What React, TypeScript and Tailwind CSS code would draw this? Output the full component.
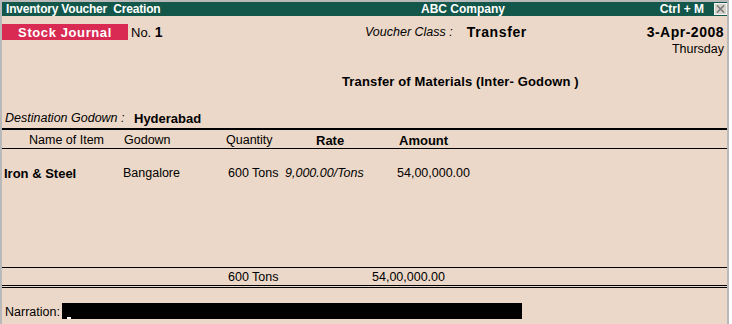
import React from "react";

const sans = { fontFamily: '"Liberation Sans", Arial, sans-serif' };

export default function App() {
  return (
    <div className="w-[732px] h-[324px] bg-white overflow-hidden" style={sans}>
      <div className="w-[729px] h-[324px] border-l-2 border-t-2 border-r-2 border-[#b9b9b9] bg-[#ecd8c8] flex flex-col text-black text-[12.5px]">
        {/* title bar */}
        <div className="h-[14px] bg-[#13574a] flex items-center text-white text-[12px] font-bold leading-none">
          <span className="w-[419px] pl-[4px] tracking-[-0.2px]">Inventory Voucher&nbsp; Creation</span>
          <span className="flex-1">ABC Company</span>
          <span className="mr-[10px]">Ctrl + M</span>
          <span className="w-[13px] h-[12px] bg-[#d8d4cc] border border-[#f4f4f4] flex items-center justify-center">
            <svg width="9" height="8" viewBox="0 0 9 8">
              <path d="M1 0.5 L8 7.5 M8 0.5 L1 7.5" stroke="#7a7a7a" strokeWidth="1.6" />
            </svg>
          </span>
        </div>

        {/* voucher header */}
        <div className="mt-[8px] flex items-start leading-none">
          <div className="w-[126px] h-[16px] bg-[#d82a52] text-white font-bold text-[13px] tracking-[0.6px] flex items-center justify-center">
            Stock Journal
          </div>
          <div className="w-[237px] h-[16px] pl-[3px] flex items-center text-[13px]">
            No.&nbsp;<span className="font-bold text-[14px]">1</span>
          </div>
          <div className="flex-1 h-[16px] flex items-center">
            <span className="italic">Voucher Class :</span>
            <span className="ml-[14px] font-bold text-[14px] tracking-[0.6px]">Transfer</span>
          </div>
          <div className="flex flex-col items-end pr-[3px]">
            <span className="h-[16px] flex items-center font-bold text-[14px] tracking-[0.5px]">3-Apr-2008</span>
            <span className="h-[17px] pt-[1px] flex items-center">Thursday</span>
          </div>
        </div>

        <div className="mt-[16px] h-[16px] pt-[1px] pl-[340px] flex items-center font-bold text-[13px] tracking-[0.15px] leading-none">
          Transfer of Materials (Inter- Godown )
        </div>

        <div className="mt-[21px] h-[16px] pt-[1px] pl-[3px] flex items-center leading-none">
          <span className="italic w-[129px]">Destination Godown :</span>
          <span className="font-bold text-[13px]">Hyderabad</span>
        </div>

        <div className="mt-[2px] h-[2px] bg-black" />

        {/* column heads */}
        <div className="h-[19px] pt-[2px] flex items-center border-b border-black leading-none">
          <span className="w-[122px] pl-[27px]">Name of Item</span>
          <span className="w-[102px]">Godown</span>
          <span className="w-[90px]">Quantity</span>
          <span className="w-[83px] font-bold text-[13px]">Rate</span>
          <span className="font-bold text-[13px]">Amount</span>
        </div>

        {/* items */}
        <div className="h-[119px] border-b border-black">
          <div className="mt-[16px] h-[17px] flex items-center leading-none">
            <span className="w-[121px] pl-[2px] font-bold text-[13px]">Iron &amp; Steel</span>
            <span className="w-[105px]">Bangalore</span>
            <span className="w-[57px]">600 Tons</span>
            <span className="w-[112px] italic">9,000.00/Tons</span>
            <span>54,00,000.00</span>
          </div>
        </div>

        {/* totals */}
        <div className="h-[17px] pt-[2px] flex items-center leading-none">
          <span className="w-[226px]" />
          <span className="w-[144px]">600 Tons</span>
          <span>54,00,000.00</span>
        </div>
        <div className="h-[3px] border-y border-black" />

        {/* narration */}
        <div className="mt-[15px] h-[16px] flex items-center leading-none">
          <span className="w-[60px] pl-[3px] pt-[2px]">Narration:</span>
          <div className="w-[460px] h-[16px] bg-black flex items-end pl-[5px]">
            <span className="w-[4px] h-[2px] bg-white" />
          </div>
        </div>
      </div>
    </div>
  );
}
